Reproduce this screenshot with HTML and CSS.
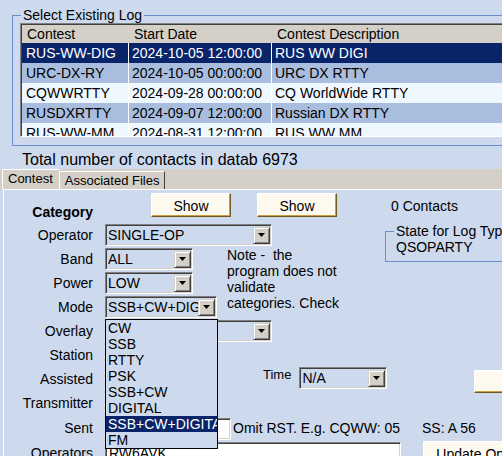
FILE: index.html
```html
<!DOCTYPE html>
<html lang="en">
<head>
  <meta charset="UTF-8" />
  <title>Contest Log</title>
  <link rel="stylesheet" href="styles.css">
</head>
<body>
  <fieldset class="log-group">
    <legend>Select Existing Log</legend>
    <div class="listview">
      <div class="lv-head">
        <div class="c1">Contest</div>
        <div class="c2">Start Date</div>
        <div class="c3">Contest Description</div>
      </div>
      <div class="lv-row selected">
        <div class="c1">RUS-WW-DIG</div>
        <div class="c2">2024-10-05 12:00:00</div>
        <div class="c3">RUS WW DIGI</div>
      </div>
      <div class="lv-row alt">
        <div class="c1">URC-DX-RY</div>
        <div class="c2">2024-10-05 00:00:00</div>
        <div class="c3">URC DX RTTY</div>
      </div>
      <div class="lv-row">
        <div class="c1">CQWWRTTY</div>
        <div class="c2">2024-09-28 00:00:00</div>
        <div class="c3">CQ WorldWide RTTY</div>
      </div>
      <div class="lv-row alt">
        <div class="c1">RUSDXRTTY</div>
        <div class="c2">2024-09-07 12:00:00</div>
        <div class="c3">Russian DX RTTY</div>
      </div>
      <div class="lv-row">
        <div class="c1">RUS-WW-MM</div>
        <div class="c2">2024-08-31 12:00:00</div>
        <div class="c3">RUS WW MM</div>
      </div>
    </div>
  </fieldset>

  <div class="total">Total number of contacts in datab 6973</div>

  <div class="tabs">
    <div class="tab active">Contest</div>
    <div class="tab">Associated Files</div>
  </div>

  <div class="panel">
    <div class="form">
      <div class="lbl cat">Category</div>
      <div class="field wide">
        <button class="btn show-first">Show</button>
        <button class="btn show-second">Show</button>
        <span class="contacts">0 Contacts</span>
      </div>

      <div class="lbl">Operator</div>
      <div class="field to-note">
        <div class="combo w167"><span class="val">SINGLE-OP</span><span class="arrow"><svg width="7" height="4" viewBox="0 0 7 4"><polygon points="0,0 7,0 3.5,4" fill="#000"/></svg></span></div>
      </div>
      <fieldset class="state">
        <legend>State for Log Type</legend>
        <div class="state-val">QSOPARTY</div>
      </fieldset>

      <div class="lbl">Band</div>
      <div class="field">
        <div class="combo w88"><span class="val">ALL</span><span class="arrow"><svg width="7" height="4" viewBox="0 0 7 4"><polygon points="0,0 7,0 3.5,4" fill="#000"/></svg></span></div>
      </div>
      <div class="note">Note -&nbsp; the program does not validate categories. Check</div>

      <div class="lbl">Power</div>
      <div class="field">
        <div class="combo w88"><span class="val">LOW</span><span class="arrow"><svg width="7" height="4" viewBox="0 0 7 4"><polygon points="0,0 7,0 3.5,4" fill="#000"/></svg></span></div>
      </div>

      <div class="lbl">Mode</div>
      <div class="field">
        <div class="combo w112"><span class="val">SSB+CW+DIGITAL</span><span class="arrow"><svg width="7" height="4" viewBox="0 0 7 4"><polygon points="0,0 7,0 3.5,4" fill="#000"/></svg></span>
          <ul class="dropdown">
            <li>CW</li>
            <li>SSB</li>
            <li>RTTY</li>
            <li>PSK</li>
            <li>SSB+CW</li>
            <li>DIGITAL</li>
            <li class="picked">SSB+CW+DIGITAL</li>
            <li>FM</li>
          </ul>
        </div>
      </div>

      <div class="lbl">Overlay</div>
      <div class="field wide">
        <div class="combo w167"><span class="val"></span><span class="arrow"><svg width="7" height="4" viewBox="0 0 7 4"><polygon points="0,0 7,0 3.5,4" fill="#000"/></svg></span></div>
      </div>

      <div class="lbl">Station</div>

      <div class="lbl">Assisted</div>
      <div class="field time-row">
        <span class="time-lbl">Time</span>
        <div class="combo w88"><span class="val">N/A</span><span class="arrow"><svg width="7" height="4" viewBox="0 0 7 4"><polygon points="0,0 7,0 3.5,4" fill="#000"/></svg></span></div>
        <button class="btn side-btn"></button>
      </div>

      <div class="lbl">Transmitter</div>

      <div class="lbl">Sent</div>
      <div class="field wide sent-row">
        <div class="textbox w126"></div>
        <span class="hint">Omit RST. E.g. CQWW: 05</span>
        <span class="ss">SS: A 56</span>
      </div>

      <div class="lbl">Operators</div>
      <div class="field wide ops-row">
        <div class="textbox w296">RW6AVK</div>
        <button class="btn update-btn">Update Operators</button>
      </div>
    </div>
  </div>
</body>
</html>
```

FILE: styles.css
```css
body {
  margin: 0;
  width: 502px;
  height: 456px;
  overflow: hidden;
  background: #cddaee;
  font-family: "Liberation Sans", Arial, sans-serif;
  font-size: 14px;
  color: #000;
}

/* existing log group */
.log-group {
  margin: 7px -80px 0 12px;
  padding: 0 0 8px 7px;
  border: 1px solid #6b8dc8;
  min-width: 0;
}
.log-group legend,
.state legend {
  margin-left: 1px;
  padding: 0 2px;
  font-size: 14px;
  line-height: 16px;
}
.listview {
  height: 114px;
  box-sizing: border-box;
  overflow: hidden;
  border: 1px solid;
  border-color: #808080 #fff #fff #808080;
  box-shadow: inset 1px 1px #404040, inset -1px -1px #d4d0c8;
  padding: 1px 0 0 1px;
}
.lv-head,
.lv-row {
  display: flex;
  white-space: nowrap;
}
.lv-head {
  height: 18px;
  line-height: 18px;
  background: #d4d0c8;
}
.lv-head div {
  padding-left: 5px;
}
.lv-row {
  height: 19.9px;
  line-height: 21px;
  background: #f0f8ff;
}
.lv-row.alt {
  background: #a9bedf;
}
.lv-row.selected {
  background: #0a246a;
  color: #fff;
}
.c1 {
  width: 107px;
  box-sizing: border-box;
}
.c2 {
  width: 143px;
  box-sizing: border-box;
}
.c3 {
  flex: 1;
}
.lv-row .c1 {
  padding-left: 4px;
  border-right: 1px solid #fff;
}
.lv-row .c2 {
  padding-left: 3px;
  border-right: 1px solid #fff;
}
.lv-row .c3 {
  padding-left: 3px;
}

.total {
  margin: 4px 0 0 22px;
  font-size: 16px;
  line-height: 19px;
}

/* tabs */
.tabs {
  display: flex;
  align-items: flex-end;
  height: 20px;
  background: #d4d0c8;
  padding-left: 2px;
  font-size: 13px;
}
.tab {
  height: 17px;
  line-height: 18px;
  padding: 0 5px;
  border-left: 1px solid #fff;
  border-top: 1px solid #fff;
  border-right: 1px solid #404040;
}
.tab.active {
  height: 19px;
  line-height: 17px;
  padding: 0 6px 0 5px;
  border-right: none;
}

.panel {
  margin-left: 3px;
  height: 270px;
  border-top: 1px solid #fff;
  border-left: 1px solid #fff;
  padding-top: 3px;
}

.form {
  display: grid;
  grid-template-columns: 101px 122px 158px 1fr;
  grid-template-rows: 30px repeat(8, 24px) 26px 24px;
}
.lbl {
  grid-column: 1;
  padding-right: 12px;
  text-align: right;
  line-height: 22px;
  align-self: center;
}
.lbl.cat {
  font-weight: bold;
  align-self: end;
}
.field {
  grid-column: 2;
  display: flex;
  align-items: center;
}
.field > * {
  flex-shrink: 0;
}
.field.to-note {
  grid-column: 2 / 4;
}
.field.wide {
  grid-column: 2 / -1;
}

/* buttons */
.btn {
  height: 24px;
  box-sizing: border-box;
  background: #fffaf0;
  border: 1px solid;
  border-color: #fff #6e5a1a #6e5a1a #fff;
  box-shadow: inset -1px -1px #c8a040;
  font-family: inherit;
  font-size: 14px;
  color: #000;
  padding: 1px 0 0;
  white-space: nowrap;
  overflow: hidden;
}
.show-first {
  width: 80px;
  margin-left: 46px;
  align-self: flex-start;
}
.show-second {
  width: 80px;
  margin-left: 26px;
  align-self: flex-start;
}
.contacts {
  margin-left: 54px;
  align-self: flex-start;
  line-height: 26px;
}

/* combo boxes */
.combo {
  position: relative;
  display: flex;
  align-items: center;
  height: 22px;
  box-sizing: border-box;
  border: 1px solid;
  border-color: #808080 #fff #fff #808080;
  box-shadow: inset 1px 1px #404040, inset -1px -1px #d4d0c8;
  padding: 0 1px 0 2px;
}
.w88 { width: 88px; }
.w112 { width: 112px; }
.w167 { width: 167px; }
.w126 { width: 126px; }
.w296 { width: 296px; }
.combo .val {
  flex: 1;
  white-space: nowrap;
  overflow: hidden;
}
.arrow {
  flex-shrink: 0;
  width: 17px;
  height: 17px;
  box-sizing: border-box;
  background: #d4d0c8;
  border: 1px solid;
  border-color: #d4d0c8 #404040 #404040 #d4d0c8;
  box-shadow: inset 1px 1px #fff, inset -1px -1px #808080;
  display: flex;
  align-items: center;
  justify-content: center;
}

.dropdown {
  position: absolute;
  left: -1px;
  top: 22px;
  z-index: 10;
  width: 113px;
  box-sizing: border-box;
  margin: 0;
  padding: 0;
  list-style: none;
  background: #cddaee;
  border: 1px solid #000;
  overflow: hidden;
}
.dropdown li {
  line-height: 16px;
  padding-left: 2px;
  white-space: nowrap;
}
.dropdown li.picked {
  background: #0a246a;
  color: #fff;
}

/* state group */
.state {
  grid-column: 4;
  grid-row: 2 / 4;
  align-self: start;
  margin: 0 -40px 0 0;
  padding: 0 0 6px 0;
  border: 1px solid #6b8dc8;
  min-width: 0;
}
.state legend {
  margin-left: 8px;
  white-space: nowrap;
}
.state-val {
  padding-left: 10px;
  line-height: 16px;
}

.note {
  grid-column: 3;
  grid-row: 3 / 6;
  width: 115px;
  height: 64px;
  overflow: hidden;
  line-height: 16px;
  align-self: start;
}

.time-row {
  grid-column: 3 / -1;
  align-items: flex-start;
}
.time-lbl {
  margin-left: 36px;
  margin-right: 8px;
  font-size: 13px;
  line-height: 16px;
}
.side-btn {
  width: 60px;
  height: 23px;
  margin-left: 87px;
  margin-top: 3px;
}

/* text boxes */
.textbox {
  height: 22px;
  box-sizing: border-box;
  background: #fff;
  border: 1px solid;
  border-color: #808080 #fff #fff #808080;
  box-shadow: inset 1px 1px #404040, inset -1px -1px #d4d0c8;
  padding-left: 3px;
  line-height: 20px;
  white-space: nowrap;
  overflow: hidden;
}
.sent-row {
  align-items: flex-start;
}
.sent-row .textbox {
  margin-top: 3px;
}
.hint {
  margin-left: 2px;
  line-height: 26px;
}
.ss {
  margin-left: 22px;
  line-height: 26px;
}
.ops-row {
  align-items: flex-start;
}
.ops-row .textbox {
  margin-top: 1px;
}
.update-btn {
  width: 138px;
  margin-left: 22px;
}
```
